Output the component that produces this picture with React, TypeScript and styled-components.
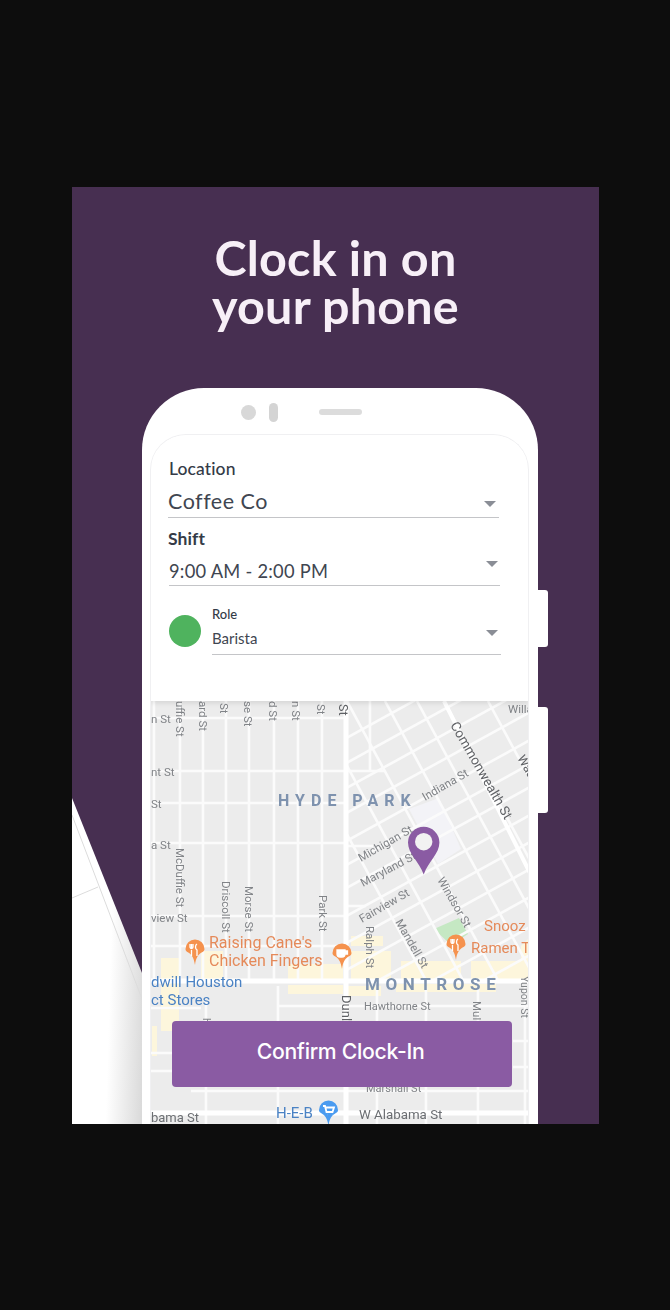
import React from "react";
import styled, { createGlobalStyle } from "styled-components";

const Global = createGlobalStyle`
  html, body { margin: 0; padding: 0; background: #0d0d0d; }
  * { box-sizing: border-box; }
`;
const Page = styled.div`
  width: 670px; height: 1310px; padding: 187px 71px 186px 72px; background: #0d0d0d;
  font-family: Lato, "Open Sans", sans-serif;
`;
const Card = styled.section`
  position: relative; width: 527px; height: 937px; overflow: hidden; background: #472f51;
  display: flex; flex-direction: column; align-items: flex-start;
`;
const Title = styled.h1`
  margin: 0; padding-top: 46px; width: 100%; text-align: center;
  font: 700 48.5px/48px Lato, sans-serif; letter-spacing: .2px; color: #f7eff7;
`;
const Paper = styled.svg`
  position: absolute; left: 0; top: 0; width: 527px; height: 937px;
`;
const Phone = styled.div`
  position: relative; margin: 59px 0 0 70px; width: 396px; flex: 1; min-height: 0;
  background: #fff; border-radius: 62px 62px 0 0; padding: 0 9px 0 8px;
  display: flex; flex-direction: column;
`;
const SideButton = styled.div<{ $top: number; $h: number }>`
  position: absolute; left: 396px; top: ${p => p.$top}px; width: 10px; height: ${p => p.$h}px;
  background: #fff; border-radius: 0 3px 3px 0;
`;
const PhoneTop = styled.div`
  height: 46px; flex: none; position: relative; display: flex; align-items: center;
  padding: 2px 0 0 91px;
`;
const Camera = styled.div` width: 15px; height: 15px; border-radius: 50%; background: #d8d8d8; `;
const Sensor = styled.div` width: 9px; height: 19px; margin-left: 13px; border-radius: 5px; background: #d4d4d4; `;
const Speaker = styled.div` width: 43px; height: 6px; margin-left: 41px; border-radius: 3px; background: #dcdcdc; `;
const Screen = styled.div`
  flex: 1; min-height: 0; border: 1px solid #f0f0f2; border-bottom: 0; border-radius: 36px 36px 0 0;
  overflow: hidden; display: flex; flex-direction: column; position: relative;
`;
const Form = styled.div`
  flex: none; height: 266px; padding: 24px 29px 0 17px; background: #fff; color: #343b47;
  position: relative; z-index: 1; box-shadow: 0 2px 5px rgba(0,0,0,.1);
`;
const Label = styled.div<{ $inset?: number; $top?: number; $bold?: boolean }>`
  font-size: 17.5px; line-height: 20px; font-weight: ${p => (p.$bold ? 700 : 500)};
  margin-left: ${p => p.$inset ?? 0}px; margin-top: ${p => p.$top ?? 0}px; letter-spacing: .1px;
`;
const Select = styled.div<{ $inset?: number; $h: number; $pad: number }>`
  display: flex; justify-content: space-between; align-items: flex-start;
  margin-left: ${p => p.$inset ?? 0}px; margin-right: ${p => -(p.$inset ?? 0)}px;
  height: ${p => p.$h}px; padding-top: ${p => p.$pad}px; border-bottom: 1px solid #c4c5c8;
`;
const Value = styled.span<{ $size: number; $lh: number; $spacing?: number }>`
  font-size: ${p => p.$size}px; line-height: ${p => p.$lh}px;
  letter-spacing: ${p => p.$spacing ?? 0}px; font-weight: 400; color: #3f4651;
`;
const Caret = styled.span<{ $top: number; $right: number }>`
  width: 0; height: 0; margin: ${p => p.$top}px ${p => p.$right}px 0 0;
  border-left: 6px solid transparent; border-right: 6px solid transparent; border-top: 6px solid #8a8e96;
`;
const RoleRow = styled.div` display: flex; gap: 11px; margin: 20px -2px 0 1px; `;
const Dot = styled.div` width: 32px; height: 32px; flex: none; margin-top: 9px; border-radius: 50%; background: #4fb35e; `;
const RoleBody = styled.div` flex: 1; `;
const RoleLabel = styled.div` font-size: 13px; line-height: 16px; font-weight: 500; `;
const MapPane = styled.div` flex: 1; min-height: 0; position: relative; overflow: hidden; background: #ebebeb; `;
const MapArt = styled.svg` display: block; width: 379px; height: 424px; filter: blur(.5px); `;
const Confirm = styled.button`
  position: absolute; left: 21px; top: 320px; width: 340px; height: 66px; border: 0; border-radius: 4px;
  background: #8a5ba3; color: #fff; font: 500 21.2px Inter, Lato, sans-serif; letter-spacing: -.3px;
  padding: 0 3px 6px 0;
`;

const up = [740, 765, 790, 815, 843, 867, 890, 918, 945, 972, 1000, 1030, 1058];
const down = [328, 365, 400, 438, 470, 497, 541];
const vert = [153, 179, 202, 225, 248, 273, 297, 321];
const horiz = [717, 770, 802, 842, 915, 945];

type T = { t: string; x: number; y: number; r?: number; s?: number; c?: string };
const grey = "#808387";
const dark = "#5f6165";
const labels: T[] = [
  { t: "n St", x: 150, y: 722 }, { t: "nt St", x: 150, y: 775 }, { t: "St", x: 150, y: 807 }, { t: "a St", x: 150, y: 848 },
  { t: "view St", x: 150, y: 921 }, { t: "uffie St", x: 175, y: 700, r: 90 }, { t: "ard St", x: 198, y: 700, r: 90 },
  { t: "St", x: 219, y: 702, r: 90 }, { t: "se St", x: 243, y: 700, r: 90 }, { t: "d St", x: 268, y: 700, r: 90 },
  { t: "n St", x: 291, y: 700, r: 90 }, { t: "St", x: 316, y: 703, r: 90 },
  { t: "McDuffie St", x: 175, y: 847, r: 90 }, { t: "Driscoll St", x: 221, y: 880, r: 90 }, { t: "Morse St", x: 244, y: 885, r: 90 },
  { t: "Park St", x: 318, y: 894, r: 90 }, { t: "Ralph St", x: 365, y: 925, r: 90 }, { t: "Yupon St", x: 520, y: 975, r: 90, s: 10.5 },
  { t: "Mulberry", x: 472, y: 1000, r: 90 }, { t: "St", x: 338, y: 703, r: 90, c: dark, s: 12.5 },
  { t: "Dunlavy", x: 341, y: 994, r: 90, c: dark, s: 13 },
  { t: "Commonwealth St", x: 449, y: 724, r: 60, c: dark, s: 13.4 }, { t: "Waugh", x: 516, y: 757, r: 60, c: dark, s: 12.5 },
  { t: "Willard", x: 507, y: 712 }, { t: "Indiana St", x: 424, y: 800, r: -30 }, { t: "Michigan St", x: 360, y: 861, r: -30 },
  { t: "Maryland St", x: 362, y: 886, r: -28 }, { t: "Fairview St", x: 361, y: 922, r: -30 },
  { t: "Windsor St", x: 436, y: 879, r: 60 }, { t: "Mandell St", x: 394, y: 921, r: 60 },
  { t: "Hawthorne St", x: 363, y: 1009, s: 11 }, { t: "Marshall St", x: 365, y: 1091, s: 11 },
  { t: "W Alabama St", x: 358, y: 1118, s: 13.3, c: "#6b6e72" }, { t: "bama St", x: 150, y: 1121, s: 13, c: "#6b6e72" }, { t: "H", x: 202, y: 1017, r: 90, s: 10 },
];
const poi: T[] = [
  { t: "Raising Cane's", x: 208, y: 947, s: 16, c: "#e58a5a" }, { t: "Chicken Fingers", x: 208, y: 965, s: 16, c: "#e58a5a" },
  { t: "Snooz", x: 483, y: 930, s: 15, c: "#e58a5a" }, { t: "Ramen T", x: 470, y: 952, s: 15, c: "#e58a5a" },
  { t: "dwill Houston", x: 150, y: 986, s: 15, c: "#4a82c4" }, { t: "ct Stores", x: 150, y: 1004, s: 15, c: "#4a82c4" },
  { t: "H-E-B", x: 275, y: 1117, s: 15, c: "#4a82c4" },
];

const Marker = ({ x, y, fill, kind }: { x: number; y: number; fill: string; kind: "fork" | "cup" | "cart" }) => (
  <g transform={`translate(${x} ${y})`}>
    <path d="M0 15C-2-0 -9.5 4 -9.5-1a9.5 9.5 0 1 1 19 0C9.5 4 2 0 0 15Z" fill={fill} />
    {kind === "fork" && <path d="M-3.5-6v5M-5-6v3a1.5 1.5 0 0 0 3 0v-3M-3.5 0v6M2-6c-2 1-2 5 0 6v6" stroke="#fff" strokeWidth="1.3" fill="none" />}
    {kind === "cup" && <path d="M-5-4h8v4a3 3 0 0 1-3 3h-2a3 3 0 0 1-3-3ZM3-3h2.5v3H3" stroke="#fff" strokeWidth="1.3" fill="#fff" />}
    {kind === "cart" && <path d="M-5.5-5h2l1.5 6h6l1.5-4.5h-8.5M-1.5 3.5h.1M3.5 3.5h.1" stroke="#fff" strokeWidth="1.8" fill="none" />}
  </g>
);

const MapDrawing = () => (
  <MapArt viewBox="150 700 379 424">
    <defs>
      <clipPath id="diag"><rect x="345" y="700" width="184" height="278" /></clipPath>
    </defs>
    <rect x="150" y="700" width="379" height="424" fill="#ececec" />
    <path d="M408 808 438 797 460 848 437 863Z" fill="#f3f3f7" />
    <path d="M433 928 458 917 467 933 450 944Z" fill="#c5e8c3" />
    <g fill="#fdf6dc">
      <path d="M160 957h18v73h-18ZM151 1025h5v30h-5ZM200 950h22v30h-22ZM287 963h55v16h-55ZM287 984h55v9h-55ZM350 935h32v10h-32ZM350 950h40v29h-40ZM400 960h60v19h-60ZM470 960h50v-15l10-10v44h-60ZM345 985h35v10h-35ZM395 983h100v8H395Z" />
    </g>
    <g stroke="#fbfbfb" strokeWidth="2.6" fill="none">
      {vert.map(x => <path key={x} d={`M${x} 700V978`} />)}
      {horiz.map(y => <path key={y} d={`M150 ${y}H345`} />)}
      <path d="M369 700V770M150 1007H200M277 985V1124M205 1000V1124M376 985V1124M425 985V1124M477 985V1124M524 985V1124" />
      <path d="M277 1005H529M150 1052H172M150 1070H172M190 1090H529M512 1040H529M512 1066H529" />
      <path d="M345 770H384M345 845H372M345 905H365" />
      <g clipPath="url(#diag)">
        {up.map(c => <path key={c} d={`M340 ${c}L540 ${c - 110}`} />)}
        {down.map(x => <path key={x} d={`M${x - 100 / 1.85} 700L${x + 300 / 1.85} 1100`} />)}
      </g>
    </g>
    <path d="M345 700V1124" stroke="#fff" strokeWidth="5" />
    <path d="M150 980H529" stroke="#fff" strokeWidth="5" />
    <path d="M150 1112H529" stroke="#fff" strokeWidth="5" />
    <path d="M443 700 529 872" stroke="#fff" strokeWidth="4" />
    {labels.map(l => (
      <text key={l.t + l.x + l.y} x={l.x} y={l.y} transform={l.r ? `rotate(${l.r} ${l.x} ${l.y})` : undefined}
        fontFamily="Roboto, sans-serif" fontSize={l.s ?? 11.5} fill={l.c ?? grey}>{l.t}</text>
    ))}
    {poi.map(l => <text key={l.t} x={l.x} y={l.y} fontFamily="Roboto, sans-serif" fontSize={l.s} fill={l.c}>{l.t}</text>)}
    <text x="277" y="805" fontFamily="Roboto, sans-serif" fontWeight="700" fontSize="16" letterSpacing="6" fill="#7e92ae">HYDE PARK</text>
    <text x="364" y="988.5" fontFamily="Roboto, sans-serif" fontWeight="700" fontSize="17" letterSpacing="5.6" fill="#7e92ae">MONTROSE</text>
    <Marker x={194} y={949} fill="#f5924e" kind="fork" />
    <Marker x={341} y={953} fill="#f5924e" kind="cup" />
    <Marker x={455} y={944} fill="#f5924e" kind="fork" />
    <Marker x={327.5} y={1110} fill="#4a9bf0" kind="cart" />
    <path d="M422.7 873.5C418 860 407 853 407 841.5a15.7 15.7 0 0 1 31.4 0C438.4 853 427.5 860 422.7 873.5Z" fill="#8a5ba3" />
    <circle cx="422.7" cy="840.7" r="8.7" fill="#f2f2f2" />
  </MapArt>
);

export default function App() {
  return (
    <Page>
      <Global />
      <Card>
        <Paper viewBox="0 0 527 937">
          <defs>
            <linearGradient id="sheen" x1="0" y1="0.78" x2="1" y2="0.92">
              <stop offset="0.5" stopColor="#fff" />
              <stop offset="1" stopColor="#dadada" />
            </linearGradient>
          </defs>
          <path d="M0 611 70 786V937H0Z" fill="url(#sheen)" />
          <path d="M0 628 70 812M0 711 26 700" stroke="#dcdcdc" strokeWidth="1" fill="none" />
        </Paper>
        <Title>Clock in on<br />your phone</Title>
        <Phone>
          <SideButton $top={202} $h={57} />
          <SideButton $top={319} $h={106} />
          <PhoneTop>
            <Camera /><Sensor /><Speaker />
          </PhoneTop>
          <Screen>
            <Form>
              <Label $inset={1}>Location</Label>
              <Select $h={39} $pad={5}>
                <Value $size={21.5} $lh={34} $spacing={.5}>Coffee Co</Value>
                <Caret $top={17} $right={3} />
              </Select>
              <Label $top={11} $bold>Shift</Label>
              <Select $h={37} $pad={8} $inset={1}>
                <Value $size={18.3} $lh={28} $spacing={.25}>9:00 AM - 2:00 PM</Value>
                <Caret $top={4} $right={2} />
              </Select>
              <RoleRow>
                <Dot />
                <RoleBody>
                  <RoleLabel>Role</RoleLabel>
                  <Select $h={33} $pad={1}>
                    <Value $size={15} $lh={30}>Barista</Value>
                    <Caret $top={7} $right={3} />
                  </Select>
                </RoleBody>
              </RoleRow>
            </Form>
            <MapPane>
              <MapDrawing />
              <Confirm>Confirm Clock-In</Confirm>
            </MapPane>
          </Screen>
        </Phone>
      </Card>
    </Page>
  );
}
